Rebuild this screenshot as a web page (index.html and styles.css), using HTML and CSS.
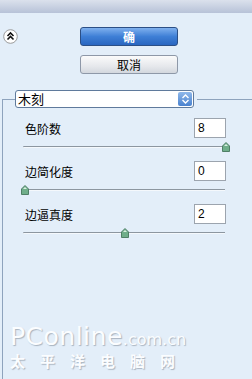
FILE: index.html
```html
<!DOCTYPE html>
<html lang="zh-CN">
<head>
    <meta charset="UTF-8">
    <title>木刻</title>
    <link rel="stylesheet" href="styles.css">
</head>
<body>
    <div class="titlebar"></div>

    <div class="top">
        <div class="collapse">
            <svg width="15" height="15" viewBox="0 0 15 15">
                <circle cx="7.5" cy="7.5" r="6.8" fill="#fff" stroke="#9a9a9a"/>
                <path d="M4.5 7 L7.5 4 L10.5 7 M4.5 10.5 L7.5 7.5 L10.5 10.5" fill="none" stroke="#111" stroke-width="1.6"/>
            </svg>
        </div>
        <div class="actions">
            <div class="btn btn-ok">确</div>
            <div class="btn btn-cancel">取消</div>
        </div>
    </div>

    <fieldset class="panel">
        <legend>
            <div class="select">
                <span>木刻</span>
                <div class="select-arrow">
                    <svg width="9" height="12" viewBox="0 0 9 12">
                        <path d="M1.5 5 L4.5 2 L7.5 5 M1.5 7 L4.5 10 L7.5 7" fill="none" stroke="#fff" stroke-width="1.4"/>
                    </svg>
                </div>
            </div>
        </legend>

        <div class="row first">
            <span class="label">色阶数</span>
            <div class="field">8</div>
        </div>
        <div class="slider">
            <div class="track"></div>
            <div class="thumb" style="left: 199px">
                <svg width="8" height="10" viewBox="0 0 8 10"><path d="M4 0.5 L7.5 4 L7.5 9.5 L0.5 9.5 L0.5 4 Z" fill="#6fae8a" stroke="#4f7f66"/><path d="M4 2 L6 4 L2 4 Z" fill="#d9f0e0"/></svg>
            </div>
        </div>

        <div class="row">
            <span class="label">边简化度</span>
            <div class="field">0</div>
        </div>
        <div class="slider">
            <div class="track"></div>
            <div class="thumb" style="left: -2px">
                <svg width="8" height="10" viewBox="0 0 8 10"><path d="M4 0.5 L7.5 4 L7.5 9.5 L0.5 9.5 L0.5 4 Z" fill="#6fae8a" stroke="#4f7f66"/><path d="M4 2 L6 4 L2 4 Z" fill="#d9f0e0"/></svg>
            </div>
        </div>

        <div class="row">
            <span class="label">边逼真度</span>
            <div class="field">2</div>
        </div>
        <div class="slider">
            <div class="track"></div>
            <div class="thumb" style="left: 98px">
                <svg width="8" height="10" viewBox="0 0 8 10"><path d="M4 0.5 L7.5 4 L7.5 9.5 L0.5 9.5 L0.5 4 Z" fill="#6fae8a" stroke="#4f7f66"/><path d="M4 2 L6 4 L2 4 Z" fill="#d9f0e0"/></svg>
            </div>
        </div>

        <div class="watermark">
            <div class="wm-site">PConline<small>.com.cn</small></div>
            <div class="wm-name">太平洋电脑网</div>
        </div>
    </fieldset>
</body>
</html>
```

FILE: styles.css
```css
html, body {
    height: 100%;
}
body {
    margin: 0;
    background-color: #e3eef9;
    font-family: "Noto Sans CJK SC", "Liberation Sans", sans-serif;
    font-size: 12px;
    color: #000;
    overflow: hidden;
}
.titlebar {
    height: 13px;
    background: linear-gradient(#dbe1ec, #b7c2d8);
}
.top {
    display: flex;
    padding-top: 14px;
}
.collapse {
    margin: 2px 0 0 3px;
    height: 15px;
}
.collapse svg {
    display: block;
}
.actions {
    display: flex;
    flex-direction: column;
    gap: 9px;
    margin-left: 62px;
}
.btn {
    box-sizing: border-box;
    width: 98px;
    height: 19px;
    border-radius: 3px;
    text-align: center;
    line-height: 17px;
    font-size: 12px;
}
.btn-ok {
    background: linear-gradient(#7fb0ee, #3e7fd6 50%, #2a66c0);
    border: 1px solid #2b4f86;
    color: #fff;
    font-weight: bold;
}
.btn-cancel {
    background: linear-gradient(#fbfbfb, #e6e8ec 60%, #d3d7de);
    border: 1px solid #8e98a8;
    color: #000;
}
.panel {
    box-sizing: border-box;
    margin: 16px 0 0 2px;
    padding: 0 0 0 12px;
    border: none;
    border-top: 1px solid #8ea3bd;
    border-left: 1px solid #8ea3bd;
    height: calc(100% - 90px);
    width: 260px;
}
.panel legend {
    padding: 0 3px 0 0;
}
.select {
    box-sizing: border-box;
    display: flex;
    align-items: center;
    justify-content: space-between;
    width: 179px;
    height: 18px;
    background: #fff;
    border: 1px solid #5f7a9c;
    border-radius: 3px;
    font-size: 13px;
    line-height: 16px;
    padding-left: 2px;
}
.select-arrow {
    width: 14px;
    height: 14px;
    margin-right: 1px;
    border-radius: 2px;
    background: linear-gradient(#8fb8ea, #4a82cf);
    display: flex;
    align-items: center;
    justify-content: center;
}
.select-arrow svg {
    display: block;
}
.row {
    display: flex;
    justify-content: space-between;
    align-items: center;
    width: 211px;
    height: 20px;
}
.row.first {
    margin-top: 10px;
}
.label {
    margin-left: 10px;
    font-size: 12px;
}
.field {
    box-sizing: border-box;
    width: 32px;
    height: 20px;
    background: #fff;
    border: 1px solid #9ca4ae;
    font-family: "Liberation Sans", sans-serif;
    font-size: 12px;
    line-height: 18px;
    padding-left: 3px;
}
.slider {
    position: relative;
    margin-left: 8px;
    width: 202px;
    height: 23px;
}
.track {
    position: absolute;
    top: 8px;
    left: 0;
    right: 0;
    height: 1px;
    background: #8c96a0;
    border-bottom: 1px solid #f4f8fc;
    border-radius: 1px 0 0 1px;
}
.thumb {
    position: absolute;
    top: 4px;
}
.thumb svg {
    display: block;
}
.watermark {
    margin: 78px 0 0 -5px;
    color: #fbfdff;
    text-shadow: 1px 1px 1px #a9b4c0;
}
.wm-site {
    font-family: "DejaVu Sans", sans-serif;
    font-size: 25px;
    line-height: 24px;
    letter-spacing: 0.5px;
}
.wm-site small {
    font-size: 16px;
    letter-spacing: 0;
}
.wm-name {
    font-size: 15px;
    font-weight: bold;
    line-height: 16px;
    letter-spacing: 15px;
    margin-top: 1px;
}
```
